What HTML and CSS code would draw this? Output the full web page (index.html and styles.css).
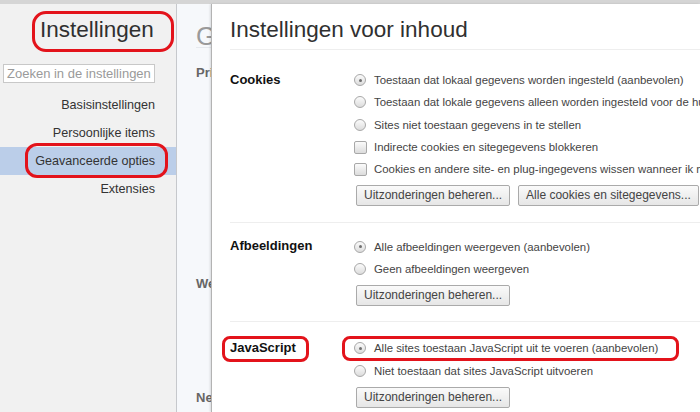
FILE: index.html
```html
<!DOCTYPE html>
<html lang="nl">
<head>
<meta charset="utf-8">
<title>Instellingen voor inhoud</title>
<link rel="stylesheet" href="styles.css">
</head>
<body>
<div class="topbar"></div>
<div class="page">
  <aside class="sidebar">
    <h1 class="side-title"><span class="mark mark-title"></span>Instellingen</h1>
    <div class="search"><span class="placeholder">Zoeken in de instellingen</span></div>
    <nav class="nav">
      <div class="nav-item">Basisinstellingen</div>
      <div class="nav-item">Persoonlijke items</div>
      <div class="nav-item active"><span class="mark mark-nav"></span>Geavanceerde opties</div>
      <div class="nav-item">Extensies</div>
    </nav>
  </aside>
  <main class="main">
    <div class="main-title">Geavanceerde opties</div>
    <div class="main-sec sec-pr">Privacy</div>
    <div class="main-sec sec-w">Webcontent</div>
    <div class="main-sec sec-ne">Netwerk</div>
  </main>
</div>

<div class="dialog">
  <h2 class="dlg-title">Instellingen voor inhoud</h2>

  <section class="dlg-sec sec-cookies">
    <div class="label">Cookies</div>
    <div class="opts">
      <div class="row"><span class="radio on"></span>Toestaan dat lokaal gegevens worden ingesteld (aanbevolen)</div>
      <div class="row"><span class="radio"></span>Toestaan dat lokale gegevens alleen worden ingesteld voor de huidige sessie</div>
      <div class="row"><span class="radio"></span>Sites niet toestaan gegevens in te stellen</div>
      <div class="row"><span class="check"></span>Indirecte cookies en sitegegevens blokkeren</div>
      <div class="row"><span class="check"></span>Cookies en andere site- en plug-ingegevens wissen wanneer ik mijn browser sluit</div>
      <div class="btns">
        <span class="btn">Uitzonderingen beheren...</span>
        <span class="btn">Alle cookies en sitegegevens...</span>
      </div>
    </div>
  </section>

  <section class="dlg-sec sec-img">
    <div class="label">Afbeeldingen</div>
    <div class="opts">
      <div class="row"><span class="radio on"></span>Alle afbeeldingen weergeven (aanbevolen)</div>
      <div class="row"><span class="radio"></span>Geen afbeeldingen weergeven</div>
      <div class="btns">
        <span class="btn">Uitzonderingen beheren...</span>
      </div>
    </div>
  </section>

  <section class="dlg-sec sec-js">
    <div class="label"><span class="mark mark-jslabel"></span>JavaScript</div>
    <div class="opts">
      <div class="row"><span class="mark mark-jsrow"></span><span class="radio on"></span>Alle sites toestaan JavaScript uit te voeren (aanbevolen)</div>
      <div class="row"><span class="radio"></span>Niet toestaan dat sites JavaScript uitvoeren</div>
      <div class="btns">
        <span class="btn">Uitzonderingen beheren...</span>
      </div>
    </div>
  </section>
</div>
</body>
</html>
```

FILE: styles.css
```css
html, body {
  margin: 0;
  padding: 0;
  width: 700px;
  height: 412px;
  overflow: hidden;
}
body {
  font-family: "Liberation Sans", Arial, sans-serif;
  color: #333;
  background: #f1f1f1;
  position: relative;
}
.topbar {
  height: 4px;
  background: #d5d5d5;
}
.page {
  display: flex;
  height: 408px;
}
.sidebar {
  width: 176px;
  flex: none;
  background: #f1f1f1;
  border-right: 1px solid #c6c8cc;
}
.side-title {
  position: relative;
  margin: 0;
  padding: 12px 0 0 40px;
  height: 38px;
  font-size: 22.5px;
  font-weight: normal;
  line-height: 28px;
  color: #303030;
}
.search {
  margin: 10px 0 0 3px;
  width: 150px;
  height: 17px;
  border: 1px solid #c8c8c8;
  background: #fff;
  overflow: hidden;
  white-space: nowrap;
}
.placeholder {
  display: block;
  padding-left: 3px;
  font-size: 13px;
  line-height: 17px;
  color: #9a9a9a;
}
.nav {
  margin-top: 8px;
}
.nav-item {
  position: relative;
  height: 28px;
  line-height: 28px;
  font-size: 12.6px;
  text-align: right;
  padding-right: 21px;
  color: #333;
}
.nav-item.active {
  background: #bbcee9;
}
.mark {
  position: absolute;
  border: 3px solid #e3131b;
  border-radius: 11px;
  box-sizing: border-box;
}
.mark-title {
  left: 32px;
  top: 7px;
  width: 142px;
  height: 41px;
  border-radius: 14px;
}
.mark-nav {
  left: 25px;
  top: -4px;
  width: 143px;
  height: 35px;
  border-radius: 12px;
}
.main {
  flex: 1;
  position: relative;
  background: #f6f8fb;
  padding-left: 19px;
  overflow: hidden;
  white-space: nowrap;
}
.main-title {
  font-size: 26px;
  color: #9a9a9a;
  line-height: 30px;
  padding-top: 17px;
  height: 26px;
  border-bottom: 1px solid #e6e9ee;
}
.main-sec {
  font-size: 13px;
  font-weight: bold;
  color: #666;
  position: absolute;
  left: 19px;
}
.sec-pr { top: 61px; }
.sec-w { top: 272px; }
.sec-ne { top: 386px; }

.dialog {
  position: absolute;
  left: 211px;
  top: 4px;
  right: 0;
  bottom: 0;
  background: #fff;
  border-left: 1px solid #b3b3b3;
  box-shadow: -1px 0 2px rgba(0,0,0,0.12);
  padding-left: 18px;
  overflow: hidden;
}
.dlg-title {
  margin: 0;
  padding-top: 12px;
  height: 33px;
  font-size: 22.5px;
  font-weight: normal;
  line-height: 28px;
  color: #303030;
  border-bottom: 1px solid #eeeeee;
  white-space: nowrap;
}
.dlg-sec {
  display: flex;
  border-bottom: 1px solid #eeeeee;
  white-space: nowrap;
}
.sec-cookies { padding: 19px 0 16px; }
.sec-img { padding: 12px 0 15px; }
.sec-js { padding: 15px 0 0; border-bottom: none; }
.label {
  position: relative;
  width: 124px;
  flex: none;
  font-size: 13px;
  font-weight: bold;
  color: #111;
  line-height: 22px;
  height: 22px;
}
.opts {
  display: flex;
  flex-direction: column;
}
.row {
  position: relative;
  display: flex;
  align-items: center;
  height: 22.3px;
  font-size: 11.4px;
  color: #444;
}
.radio, .check {
  width: 12px;
  height: 12px;
  margin-right: 8px;
  flex: none;
  box-sizing: border-box;
  border: 1px solid #a8a8a8;
  background: linear-gradient(#fbfbfb, #dcdcdc);
  position: relative;
}
.radio { border-radius: 50%; }
.check { border-radius: 2px; width: 13px; height: 13px; margin-right: 7px; }
.radio.on::after {
  content: "";
  position: absolute;
  left: 3.5px;
  top: 3.5px;
  width: 3px;
  height: 3px;
  border-radius: 50%;
  background: #6f6f6f;
}
.btns {
  display: flex;
  gap: 8px;
  margin-top: 5px;
  margin-left: 2px;
}
.btn {
  display: inline-block;
  height: 21px;
  box-sizing: border-box;
  line-height: 19px;
  padding: 0 7px;
  font-size: 12px;
  color: #444;
  border: 1px solid #aaaaaa;
  border-radius: 2px;
  background: linear-gradient(#fafafa, #e6e6e6);
}
.mark-jslabel {
  left: -8px;
  top: -1px;
  width: 87px;
  height: 26px;
  border-radius: 8px;
}
.mark-jsrow {
  left: -12px;
  top: -1px;
  width: 337px;
  height: 25px;
  border-radius: 8px;
}
```
